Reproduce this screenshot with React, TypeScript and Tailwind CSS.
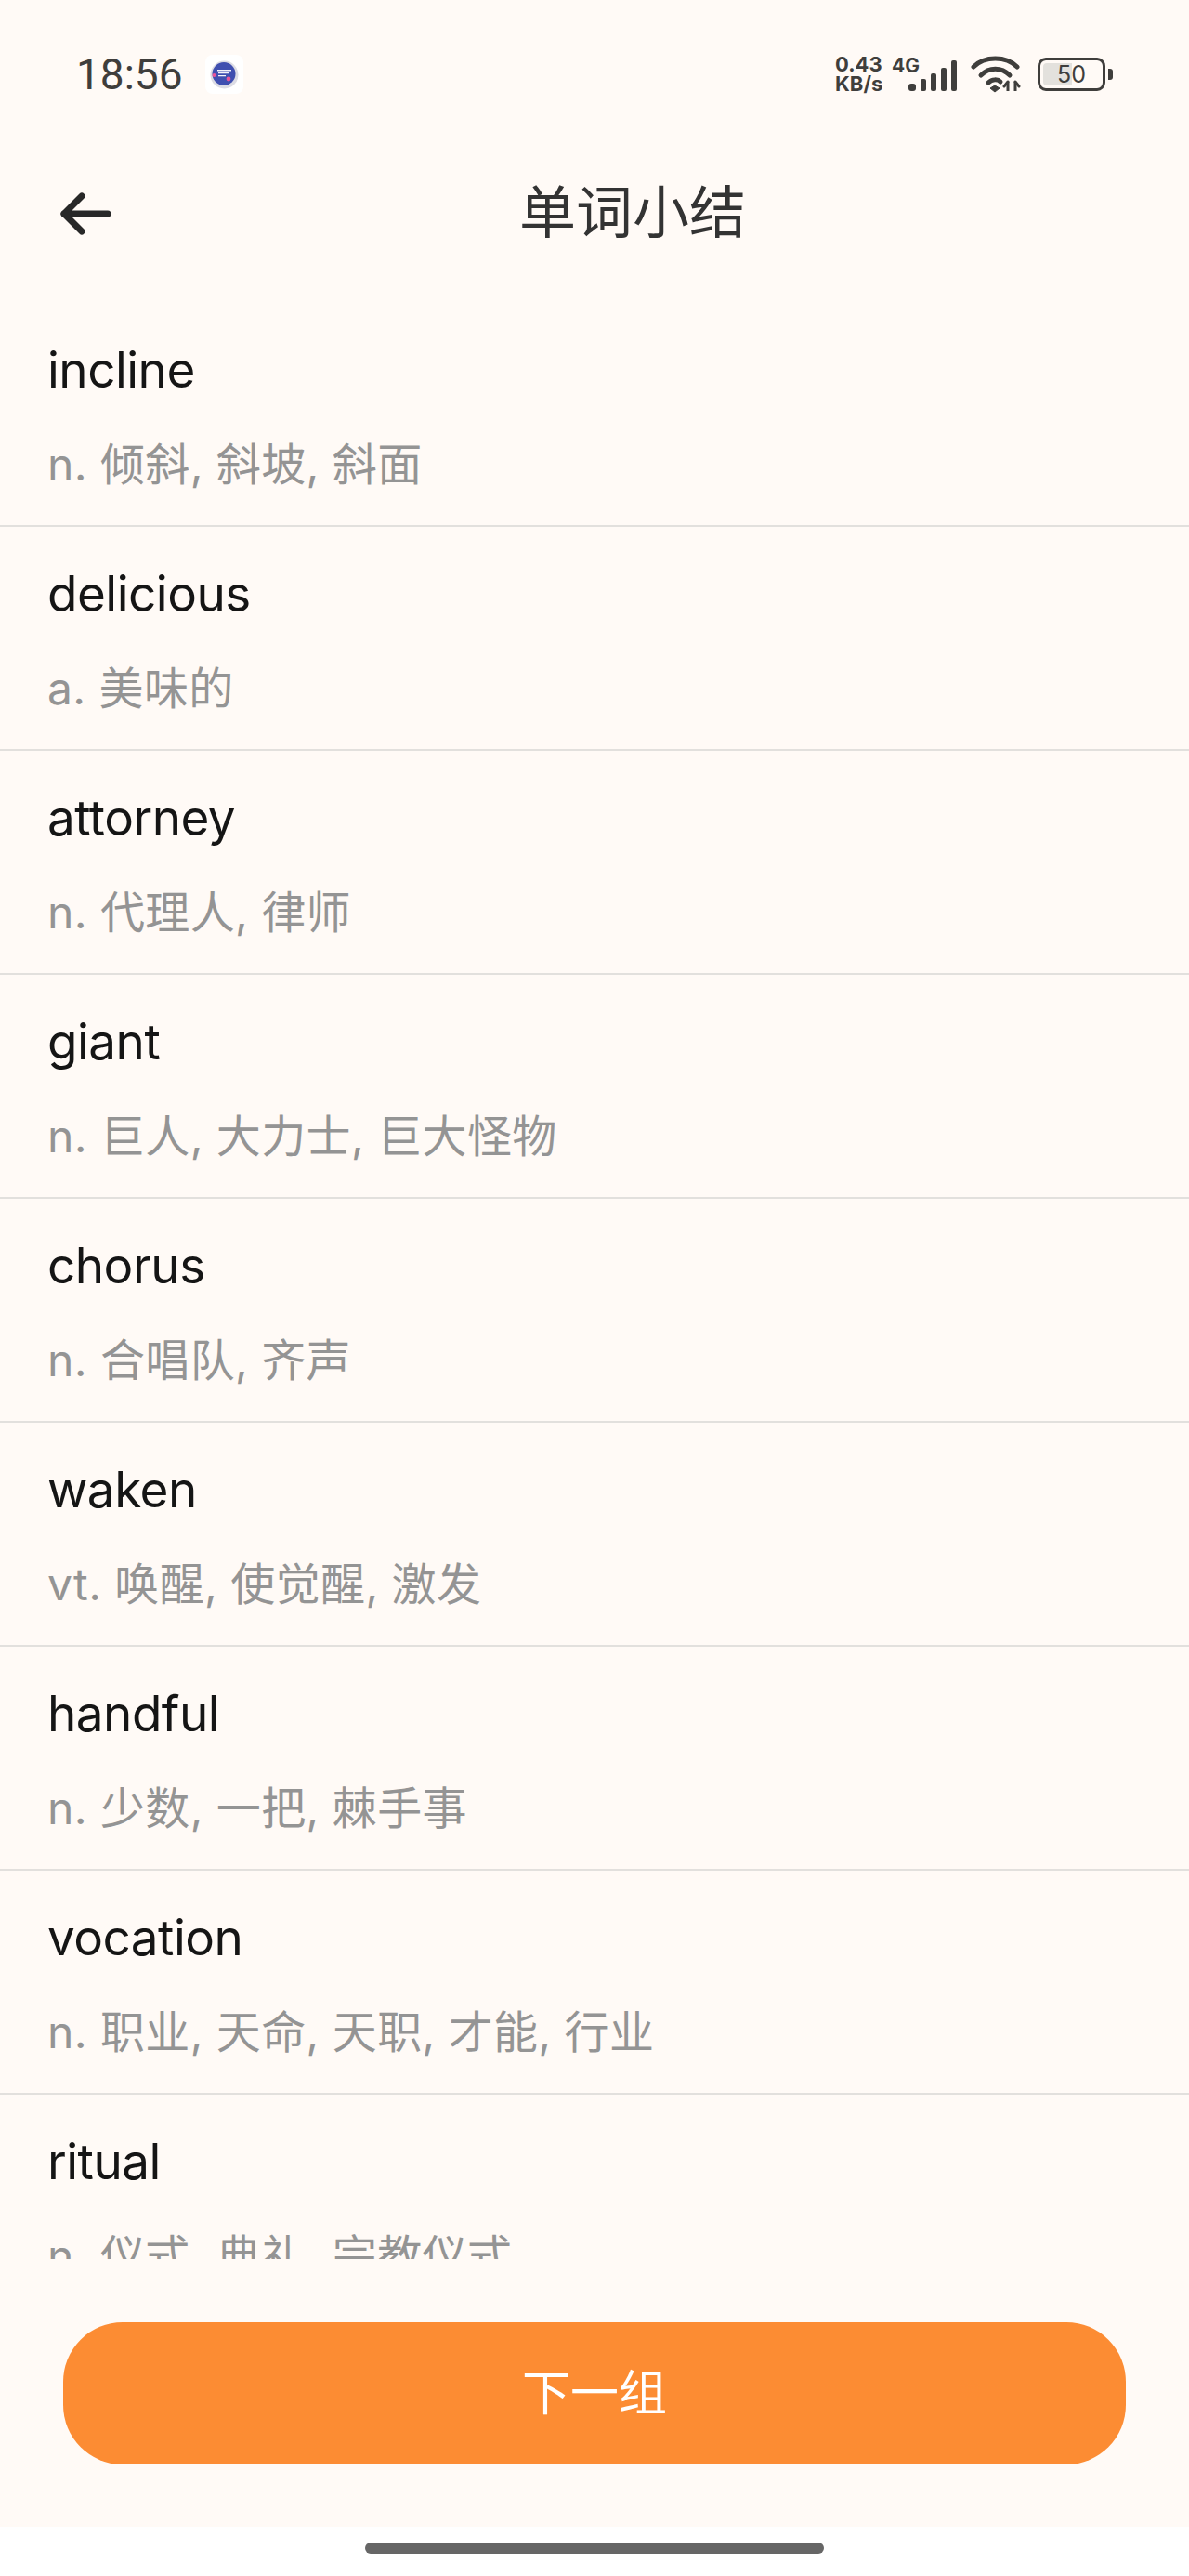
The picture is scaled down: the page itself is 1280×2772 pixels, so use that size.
const words = [
  { word: "incline", meaning: "n. 倾斜, 斜坡, 斜面" },
  { word: "delicious", meaning: "a. 美味的" },
  { word: "attorney", meaning: "n. 代理人, 律师" },
  { word: "giant", meaning: "n. 巨人, 大力士, 巨大怪物" },
  { word: "chorus", meaning: "n. 合唱队, 齐声" },
  { word: "waken", meaning: "vt. 唤醒, 使觉醒, 激发" },
  { word: "handful", meaning: "n. 少数, 一把, 棘手事" },
  { word: "vocation", meaning: "n. 职业, 天命, 天职, 才能, 行业" },
  { word: "ritual", meaning: "n. 仪式, 典礼, 宗教仪式" },
];

const fontStack = "font-['Inter','Noto_Sans_CJK_SC',sans-serif]";

function AppIcon() {
  return (
    <div className="ml-[24px] flex h-[42px] w-[41px] items-center justify-center rounded-[8px] bg-white">
      <svg width="32" height="32" viewBox="0 0 32 32">
        <circle cx="16.5" cy="16.5" r="15" fill="#dcdce4" />
        <circle cx="16" cy="15.5" r="12.5" fill="#3f4fb0" />
        <path d="M9 11h15v1.6H9zM10 14h12v1.2H10zM10 17h8v1.2H10z" fill="#f2f2fa" />
        <circle cx="5.5" cy="17" r="2" fill="#e8559a" />
        <circle cx="21" cy="21" r="2.4" fill="#e8559a" />
      </svg>
    </div>
  );
}

function StatusIcons() {
  return (
    <div className="flex items-center text-[#3f3e3c]">
      <div className="flex w-[61px] flex-col font-['Inter',sans-serif] text-[22px] leading-[21px] font-bold">
        <span>0.43</span>
        <span>KB/s</span>
      </div>
      <div className="relative h-[40px] w-[70px]">
        <span className="absolute top-[0px] left-0 font-['Inter',sans-serif] text-[21px] leading-[22px] font-bold">4G</span>
        <svg className="absolute top-0 left-0" width="70" height="40" viewBox="0 0 70 40" fill="currentColor">
          <rect x="18" y="30" width="8" height="8" rx="3" />
          <rect x="31" y="25" width="6" height="13" rx="2" />
          <rect x="42" y="19" width="6" height="19" rx="2" />
          <rect x="53" y="13" width="6" height="25" rx="2" />
          <rect x="64" y="5" width="6" height="33" rx="2" />
        </svg>
      </div>
      <svg className="ml-[15px]" width="54" height="40" viewBox="0 0 54 40" fill="none" stroke="currentColor" strokeWidth="5" strokeLinecap="round">
        <path d="M3 12C15 0 38 0 50 12" />
        <path d="M11 21C20 12 33 12 42 21" />
        <path d="M19 29C23 25 29 25 32 28" />
        <path d="M21 35l5 -3 5 3 -5 4z" fill="currentColor" strokeWidth="1" strokeLinecap="butt" />
        <path d="M40 28v10M48 28v10" strokeWidth="3" strokeLinecap="butt" />
        <path d="M36 33l4 -5 M52 33l-4 -5" strokeWidth="3" />
      </svg>
      <div className="relative ml-[18px] flex h-[36px] w-[73px] items-center justify-center rounded-[9px] border-[3px] border-[#3f3e3c] p-[3px]">
        <div className="absolute top-[3px] bottom-[3px] left-[3px] w-[31px] rounded-l-[4px] bg-[#e3e1dd]" />
        <span className="relative font-['Inter',sans-serif] text-[25px] leading-none font-normal">50</span>
      </div>
      <div className="ml-[3px] h-[12px] w-[5px] rounded-r-[3px] bg-[#3f3e3c]" />
    </div>
  );
}

export default function App() {
  return (
    <div className={`flex h-[2772px] flex-col bg-white ${fontStack}`}>
      <div className="flex h-[2719px] flex-col bg-[#fffaf6]">
        {/* status bar */}
        <div className="flex h-[160px] shrink-0 items-center justify-between pr-[82px] pl-[82px]">
          <div className="flex items-center">
            <span className="font-['Roboto',sans-serif] text-[46px] leading-none font-normal text-[#3f3e3c]">18:56</span>
            <AppIcon />
          </div>
          <StatusIcons />
        </div>

        {/* header */}
        <div className="relative flex h-[138px] shrink-0 items-center justify-center">
          <svg className="absolute top-[47px] left-[64px]" width="56" height="46" viewBox="0 0 56 46" fill="none" stroke="#282828" strokeWidth="7" strokeLinecap="round" strokeLinejoin="round">
            <path d="M52 23H5" />
            <path d="M24 4L5 23l19 19" />
          </svg>
          <h1 className="ml-[82px] text-[61px] leading-none font-normal text-[#333333]">单词小结</h1>
        </div>

        {/* word list */}
        <div className="mt-[28px] h-[2105px] shrink-0 overflow-hidden">
          {words.map((item) => (
            <div key={item.word} className="h-[241px] border-b-2 border-[#e2e0dd] pt-[42px] pl-[51px]">
              <div className="text-[53px] leading-[60px] tracking-[-0.5px] text-[#151515]">{item.word}</div>
              <div className="mt-[42px] text-[48px] leading-[60px] tracking-[0.4px] text-[#949494]">{item.meaning}</div>
            </div>
          ))}
        </div>

        {/* next button */}
        <div className="mt-[68px] px-[68px]">
          <button className="flex h-[153px] w-full items-center justify-center rounded-[64px] bg-[#fc8c33] text-[52px] text-white">
            下一组
          </button>
        </div>
      </div>

      {/* home indicator */}
      <div className="flex justify-center pt-[17px]">
        <div className="h-[12px] w-[494px] rounded-full bg-[#666666]" />
      </div>
    </div>
  );
}
